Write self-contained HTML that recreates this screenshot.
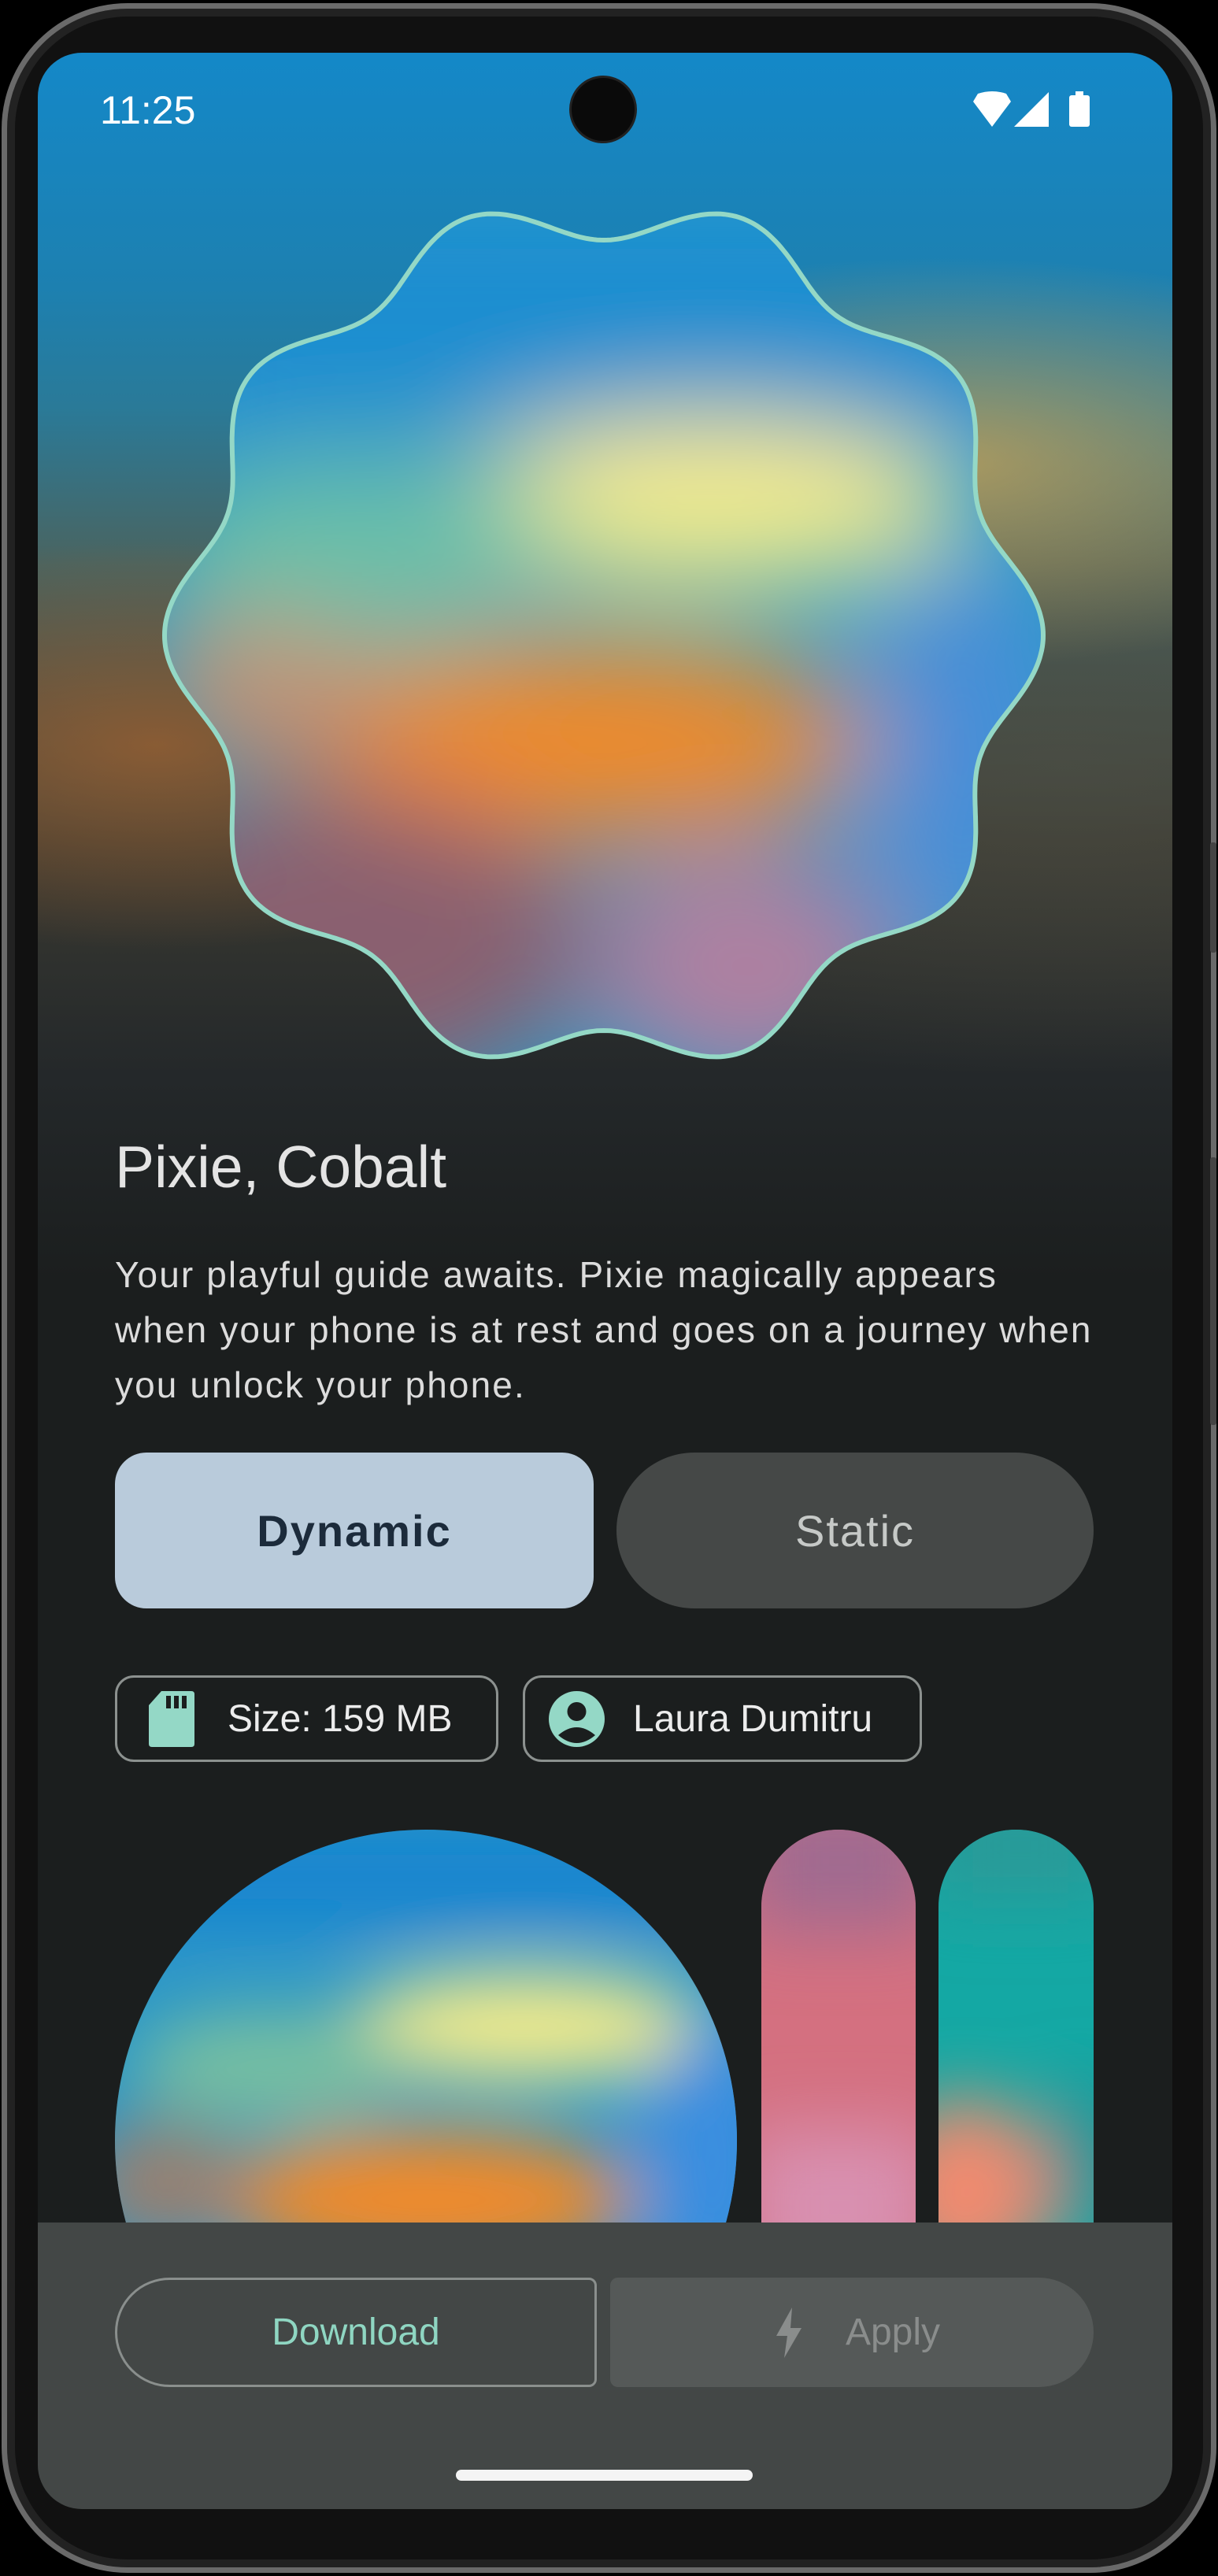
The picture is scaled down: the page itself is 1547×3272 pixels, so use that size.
<!DOCTYPE html>
<html><head><meta charset="utf-8"><style>
*{margin:0;padding:0;box-sizing:border-box}
html,body{width:1547px;height:3272px;background:#000;overflow:hidden;font-family:"Liberation Sans",sans-serif}
.frame{position:absolute;left:2px;top:4px;width:1543px;height:3264px;border-radius:160px;border:7px solid #6a6a6a;background:#111;box-shadow:inset 0 0 0 10px #222}
.screen{position:absolute;left:48px;top:67px;width:1441px;height:3120px;border-radius:56px;overflow:hidden;background:#1b1e1e}
.bg{position:absolute;left:0;top:0;width:1441px;height:1700px;
background:
radial-gradient(ellipse 700px 260px at 1150px 520px, rgba(190,160,90,.85), rgba(190,160,90,0) 100%),
radial-gradient(ellipse 600px 260px at 150px 880px, rgba(150,95,50,.85), rgba(150,95,50,0) 100%),
radial-gradient(ellipse 900px 400px at 1300px 900px, rgba(80,80,70,.6), rgba(80,80,70,0) 100%),
linear-gradient(180deg,#1488c8 0px,#1d80b0 300px,#2a7a98 450px,#4a6460 650px,#3a3a32 1000px,#24282a 1300px,#1b1e1e 1560px)}
.abs{position:absolute}
.t{color:#fff;font-size:50px;left:79px;top:44px}
.cam{left:675px;top:29px;width:86px;height:86px;border-radius:50%;background:#0a0a0a;border:3px solid #222}
h1{position:absolute;left:98px;top:1372px;font-weight:400;font-size:75px;color:#e4e4e4}
.desc{position:absolute;left:98px;top:1517px;font-size:46px;letter-spacing:2.1px;line-height:70px;color:#dcdcdc;white-space:nowrap}
.dyn{left:98px;top:1778px;width:608px;height:198px;border-radius:40px;background:#b9cbdb;color:#1c2b3b;font-weight:700;font-size:56px;letter-spacing:2px;display:flex;align-items:center;justify-content:center}
.sta{left:735px;top:1778px;width:606px;height:198px;border-radius:99px;background:#454847;color:#c6c9c7;font-size:56px;letter-spacing:2px;display:flex;align-items:center;justify-content:center}
.chip{top:2061px;height:110px;border:3px solid #8c918f;border-radius:24px;color:#ececec;font-size:48px;display:flex;align-items:center}
.panel{left:0;top:2756px;width:1441px;height:364px;background:#434746}
.dl{left:98px;top:2826px;width:612px;height:139px;border:3px solid #8a8f8d;border-radius:70px 10px 10px 70px;color:#8fd6c2;font-size:48px;display:flex;align-items:center;justify-content:center}
.ap{left:727px;top:2826px;width:614px;height:139px;background:#555958;border-radius:10px 70px 70px 10px;color:#8a8d8c;font-size:48px;display:flex;align-items:center;justify-content:center;padding-left:12px}
.home{left:531px;top:3070px;width:377px;height:14px;border-radius:7px;background:#f4f4f4}
</style></head><body>
<div class="frame"></div>
<div class="abs" style="left:1537px;top:1070px;width:8px;height:140px;background:#444;border-radius:3px"></div>
<div class="abs" style="left:1537px;top:1470px;width:8px;height:340px;background:#444;border-radius:3px"></div>
<div class="screen">
<div class="bg"></div>
<svg class="abs" style="left:0;top:0" width="1441" height="1500" viewBox="48 67 1441 1500">
<defs>
<clipPath id="cp"><path id="cpp" d="M767 277 A530 530 0 1 1 766.9 277Z"/></clipPath>
<filter id="bl" x="-50%" y="-50%" width="200%" height="200%"><feGaussianBlur stdDeviation="70"/></filter>
</defs>
<g clip-path="url(#cp)">
<rect x="200" y="250" width="1150" height="1150" fill="#2a9ac8"/>
<g filter="url(#bl)">
<rect x="200" y="250" width="1150" height="300" fill="#1a8ed0"/>
<ellipse cx="900" cy="640" rx="330" ry="110" fill="#f4ec8a"/>
<ellipse cx="450" cy="700" rx="260" ry="120" fill="#6cc0a8"/>
<ellipse cx="750" cy="940" rx="360" ry="130" fill="#f08a2c"/>
<ellipse cx="330" cy="880" rx="160" ry="90" fill="#c89070"/>
<ellipse cx="1230" cy="960" rx="120" ry="260" fill="#4a8ed8"/>
<ellipse cx="420" cy="1200" rx="330" ry="200" fill="#8a6070"/>
<ellipse cx="950" cy="1230" rx="200" ry="150" fill="#b080a0"/>
</g>
</g>
<path id="st" d="M767 277 A530 530 0 1 1 766.9 277Z" fill="none" stroke="#94d8c6" stroke-width="6"/>
</svg>
<div class="abs t">11:25</div>
<div class="abs cam"></div>
<svg class="abs" style="left:1178px;top:48px" width="210" height="50" viewBox="0 0 210 50">
<path d="M16 4 Q34 -2 52 4 L58 14 L34 46 L10 14Z" fill="#fff"/>
<path d="M62 46 L106 46 L106 2Z" fill="#fff"/>
<rect x="132" y="6" width="26" height="40" rx="3" fill="#fff"/><rect x="140" y="1" width="10" height="6" fill="#fff"/>
</svg>
<h1>Pixie, Cobalt</h1>
<div class="desc">Your playful guide awaits. Pixie magically appears<br>when your phone is at rest and goes on a journey when<br>you unlock your phone.</div>
<div class="abs dyn">Dynamic</div>
<div class="abs sta">Static</div>
<div class="abs chip" style="left:98px;width:487px">
<svg style="margin-left:40px" width="58" height="71" viewBox="0 0 58 71"><path d="M16 0 H54 Q58 0 58 4 V67 Q58 71 54 71 H4 Q0 71 0 67 V18Z" fill="#94d8c6"/><rect x="22" y="6" width="6" height="16" fill="#1b1e1e"/><rect x="32" y="6" width="6" height="16" fill="#1b1e1e"/><rect x="42" y="6" width="6" height="16" fill="#1b1e1e"/></svg>
<span style="margin-left:42px">Size: 159 MB</span></div>
<div class="abs chip" style="left:616px;width:507px">
<svg style="margin-left:30px" width="71" height="71" viewBox="0 0 71 71"><circle cx="35.5" cy="35.5" r="35.5" fill="#94d8c6"/><circle cx="35.5" cy="26" r="12" fill="#1b1e1e"/><path d="M12 56 Q35.5 36 59 56 Q35.5 76 12 56Z" fill="#1b1e1e"/></svg>
<span style="margin-left:36px">Laura Dumitru</span></div>
<svg class="abs" style="left:98px;top:2257px" width="1245" height="500">
<defs>
<clipPath id="cc"><circle cx="395" cy="395" r="395"/></clipPath>
<clipPath id="p1"><rect x="821" y="0" width="196" height="700" rx="98"/></clipPath>
<clipPath id="p2"><rect x="1046" y="0" width="197" height="700" rx="98"/></clipPath>
<filter id="b2" x="-50%" y="-50%" width="200%" height="200%"><feGaussianBlur stdDeviation="45"/></filter>
</defs>
<g clip-path="url(#cc)"><rect width="800" height="800" fill="#2a96c8"/>
<g filter="url(#b2)"><rect x="0" y="0" width="800" height="120" fill="#1284d0"/>
<ellipse cx="520" cy="250" rx="230" ry="70" fill="#f4ec8a"/><ellipse cx="200" cy="300" rx="180" ry="70" fill="#78c0a0"/>
<ellipse cx="400" cy="470" rx="260" ry="90" fill="#f08a2c"/><ellipse cx="760" cy="420" rx="90" ry="180" fill="#3a8ee0"/><ellipse cx="60" cy="450" rx="100" ry="80" fill="#9a8070"/></g></g>
<g clip-path="url(#p1)"><rect x="800" width="240" height="600" fill="#d47080"/><g filter="url(#b2)"><rect x="800" y="-50" width="240" height="180" fill="#a06a90"/><rect x="800" y="380" width="240" height="200" fill="#d890b0"/></g></g>
<g clip-path="url(#p2)"><rect x="1030" width="240" height="600" fill="#14a8a4"/><g filter="url(#b2)"><rect x="1030" y="-50" width="240" height="140" fill="#2a9a98"/><ellipse cx="1080" cy="460" rx="110" ry="120" fill="#f08a70"/><ellipse cx="1230" cy="420" rx="40" ry="100" fill="#2a8a90"/></g></g>
</svg>
<div class="abs panel"></div>
<div class="abs dl">Download</div>
<div class="abs ap"><svg width="40" height="64" viewBox="0 0 40 64" style="margin-right:52px"><path d="M24 0 L4 36 H18 L14 64 L36 26 H22Z" fill="#8a8d8c"/></svg>Apply</div>
<div class="abs home"></div>
</div>
<script>
(function(){var cx=767,cy=807,R=530,A=28,N=720,d="";
for(var i=0;i<=N;i++){var t=i/N*2*Math.PI;var r=R-A*Math.cos(10*t);var x=cx+r*Math.sin(t),y=cy-r*Math.cos(t);d+=(i?"L":"M")+x.toFixed(1)+" "+y.toFixed(1);}
d+="Z";document.getElementById("cpp").setAttribute("d",d);document.getElementById("st").setAttribute("d",d);})();
</script>
</body></html>
